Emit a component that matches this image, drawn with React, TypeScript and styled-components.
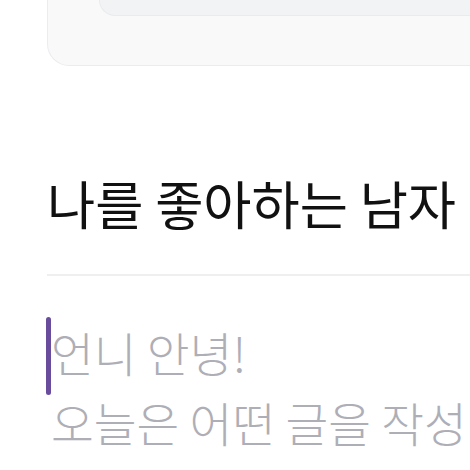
import React from "react";
import styled, { createGlobalStyle } from "styled-components";

const Global = createGlobalStyle`
  html, body {
    margin: 0;
    padding: 0;
    background: #ffffff;
    overflow: hidden;
  }
  body {
    font-family: "Noto Sans CJK KR", "Noto Sans", sans-serif;
  }
`;

const Page = styled.div`
  width: 700px;
  padding-left: 47px;
  display: flex;
  flex-direction: column;
`;

const Card = styled.div`
  height: 65px;
  background: #f9f9fa;
  border: 1px solid #ececef;
  border-top: none;
  border-radius: 0 0 22px 22px;
  padding-left: 51px;
  display: flex;
  flex-direction: column;
`;

const InnerBox = styled.div`
  height: 15px;
  background: #f2f3f5;
  border: 1px solid #e9ebee;
  border-top: none;
  border-right: none;
  border-radius: 0 0 0 22px;
`;

const Title = styled.h1`
  margin: 100px 0 0 0;
  font-size: 52.4px;
  font-weight: 400;
  line-height: 72px;
  color: #111111;
  white-space: nowrap;
`;

const Divider = styled.hr`
  margin: 36px 0 0 0;
  border: none;
  height: 2px;
  background: #efefef;
`;

const Editor = styled.div`
  position: relative;
  margin-top: 41px;
  padding-left: 4px;
`;

const Caret = styled.span`
  position: absolute;
  left: -1px;
  top: 0;
  width: 5px;
  height: 78px;
  border-radius: 3px;
  background: #6a4c9c;
`;

const Placeholder = styled.p`
  margin: 0;
  font-size: 46.5px;
  font-weight: 300;
  line-height: 70px;
  color: #aeaeb6;
  white-space: nowrap;
`;

export default function App() {
  return (
    <>
      <Global />
      <Page>
        <Card>
          <InnerBox />
        </Card>
        <Title>나를 좋아하는 남자</Title>
        <Divider />
        <Editor>
          <Caret />
          <Placeholder>
            언니 안녕!
            <br />
            오늘은 어떤 글을 작성
          </Placeholder>
        </Editor>
      </Page>
    </>
  );
}
